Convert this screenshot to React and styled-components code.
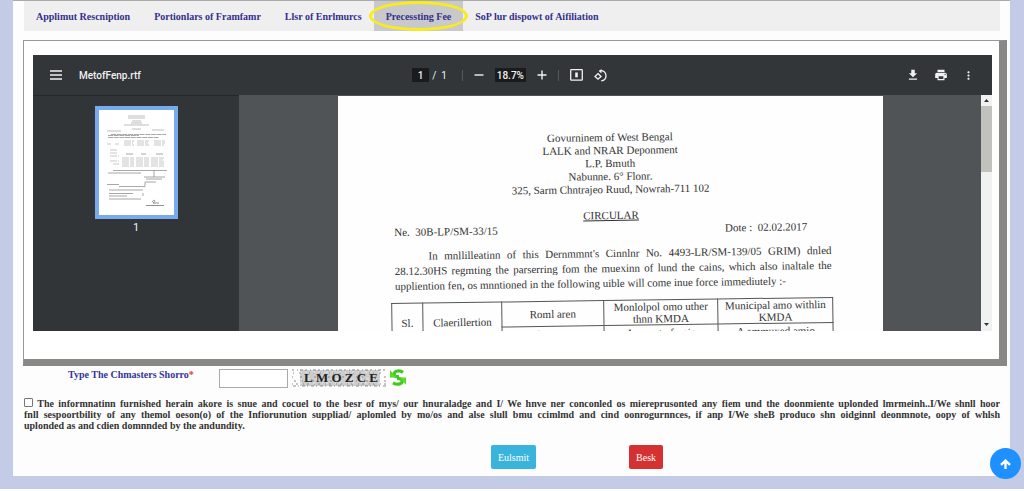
import React from 'react'
import styled, { createGlobalStyle, css } from 'styled-components'
import { MdFileDownload, MdPrint, MdMoreVert } from 'react-icons/md'

const serif = '"Liberation Serif", "Times New Roman", serif'
const sans = 'Roboto, "Liberation Sans", sans-serif'

const GlobalStyle = createGlobalStyle`
  * {
    box-sizing: border-box;
  }

  body {
    margin: 0;
    background: #fff;
    font-family: ${serif};
  }

  button, input {
    font-family: inherit;
    margin: 0;
  }
`

const Shell = styled.div`
  background: #c3cbe6;
  padding: 0 14px 13px 13px;
  margin-bottom: 2px;
`

const Content = styled.main`
  background: #fdfdfd;
  border-top: 1px solid #aaa;
  padding: 0 3px 7px 10px;
`

const Tabs = styled.nav`
  display: flex;
  height: 30px;
  margin: 0 7px 0 1px;
  background: #efefef;
`

const Tab = styled.a`
  position: relative;
  display: flex;
  align-items: center;
  padding: 0 12px;
  color: #35308c;
  font-size: 10px;
  font-weight: 700;
  text-decoration: none;
  white-space: nowrap;

  ${({ $active }) =>
    $active &&
    css`
      background: #c9c9cb;

      &::after {
        content: '';
        position: absolute;
        inset: 0 -5px;
        border: 3px solid #f8ec1c;
        border-radius: 50%;
        z-index: 1;
      }
    `}
`

const Frame = styled.section`
  margin-top: 9px;
  padding: 14px 7px 28px 9px;
  background: #fff;
  border: 1px solid #999;
  border-right: 8px solid #888987;
  border-bottom: 7px solid #888987;
`

const Viewer = styled.div`
  height: 276px;
  display: flex;
  flex-direction: column;
  overflow: hidden;
  background: #505457;
  color: #f1f1f1;
  font-family: ${sans};
`

const Toolbar = styled.div`
  flex: none;
  display: grid;
  grid-template-columns: 1fr auto 1fr;
  align-items: center;
  height: 40px;
  padding: 0 17px;
  background: #323639;
`

const ToolGroup = styled.div`
  display: flex;
  align-items: center;
  justify-content: ${({ $end }) => ($end ? 'flex-end' : 'flex-start')};
  gap: ${({ $gap }) => $gap}px;
  padding-right: ${({ $inset }) => $inset || 0}px;
`

const FileName = styled.span`
  font-size: 10px;
  font-weight: 500;
`

const ToolButton = styled.button`
  display: flex;
  padding: 0;
  border: 0;
  background: none;
  color: #f1f1f1;
`

const ToolInput = styled.input`
  width: ${({ $width }) => $width}px;
  height: 14px;
  padding: 0;
  border: 0;
  background: #191b1c;
  color: #f1f1f1;
  font-size: 10px;
  font-weight: 500;
  text-align: center;
`

const PageCount = styled.span`
  font-size: 10px;
  margin: 0 4px 0 -8px;
`

const Divider = styled.span`
  width: 1px;
  height: 11px;
  background: #54585b;
`

const ViewerBody = styled.div`
  flex: 1;
  min-height: 0;
  display: flex;
`

const Sidebar = styled.aside`
  flex: none;
  width: 206px;
  display: flex;
  flex-direction: column;
  align-items: center;
  gap: 2px;
  padding-top: 10px;
  background: #313538;
  border-top: 1px solid #25282a;
  font-size: 11px;
`

const Thumbnail = styled.button`
  display: block;
  padding: 0;
  border: 4px solid #78abee;
  background: #fff;

  svg {
    display: block;
    opacity: 0.8;
  }
`

const Canvas = styled.div`
  flex: 1;
  min-width: 0;
  overflow: hidden;
`

const Sheet = styled.article`
  width: 545px;
  height: 100%;
  margin: 1px auto 0;
  background: #fefefe;
  overflow: hidden;
`

/* the scanned page sits slightly off level */
const Scan = styled.div`
  padding: 35px 51px 0 52px;
  transform: rotate(-0.8deg);
  color: #333;
  font-family: ${serif};
  font-size: 11px;
`

const Letterhead = styled.header`
  line-height: 13px;
  text-align: center;
`

const Heading = styled.h1`
  margin: 13px 0 0;
  font-size: 11px;
  font-weight: 400;
  line-height: 13px;
  text-align: center;
  text-decoration: underline;
`

const Reference = styled.div`
  display: flex;
  justify-content: space-between;
  padding: 0 25px 0 4px;
  line-height: 14px;
`

const Clause = styled.p`
  margin: 10px 0 0;
  padding: 0 1px 0 4px;
  line-height: 15px;
`

const Line = styled.span`
  display: block;
  padding-left: ${({ $indent }) => $indent || 0}px;
  text-align: justify;
  text-align-last: ${({ $last }) => ($last ? 'left' : 'justify')};
`

const FeeTable = styled.table`
  width: 100%;
  margin-top: 9px;
  border-collapse: collapse;
  table-layout: fixed;

  th {
    height: 25px;
    padding: 0;
    border: 1px solid #555;
    font-weight: 400;
    line-height: 12px;
  }

  tr + tr th {
    height: 14px;
  }
`

const Scrollbar = styled.div`
  flex: none;
  width: 11px;
  display: flex;
  flex-direction: column;
  align-items: center;
  justify-content: space-between;
  background: #f0f1f1;
`

const ScrollThumb = styled.div`
  width: 100%;
  height: 66px;
  margin-bottom: auto;
  background: #c1c1be;
`

const ScrollArrow = styled.svg`
  flex: none;
  width: 11px;
  height: 11px;
  fill: #333;
`

const CaptchaRow = styled.div`
  display: flex;
  align-items: flex-start;
  gap: 4px;
  padding: 3px 0 0 45px;
`

const CaptchaLabel = styled.label`
  width: 147px;
  color: #35369a;
  font-size: 10px;
  font-weight: 700;
  line-height: 11px;
  white-space: nowrap;

  span {
    color: #e33;
  }
`

const CaptchaInput = styled.input`
  width: 69px;
  height: 19px;
  border: 1px solid #aaa;
  background: #fff;
`

const CaptchaCode = styled.div`
  position: relative;
  display: flex;
  justify-content: space-between;
  align-items: center;
  width: 96px;
  height: 18px;
  padding: 0 10px 0 12px;
  color: #222;
  font-size: 13px;
  font-weight: 700;

  svg {
    position: absolute;
    inset: 0;
  }

  span {
    position: relative;
  }
`

const RefreshButton = styled.button`
  display: flex;
  padding: 0;
  border: 0;
  background: none;
  margin-left: -2px;
`

const Declaration = styled.div`
  display: flow-root;
  margin: 10px 7px 0 1px;
  color: #333;
  font-size: 10px;
  font-weight: 700;
  line-height: 11px;

  input {
    appearance: none;
    width: 9px;
    height: 9px;
    border: 1px solid #777;
    border-radius: 1px;
    background: #fff;
  }
`

const Actions = styled.div`
  display: flex;
  justify-content: center;
  gap: 93px;
  margin-top: 14px;
  padding-left: 124px;
`

const ActionButton = styled.button`
  height: 24px;
  padding: 0 7px;
  border: 0;
  border-radius: 2px;
  background: ${({ $color }) => $color};
  color: #fff;
  font-size: 10px;
`

const ScrollTop = styled.a`
  position: fixed;
  right: 3px;
  bottom: 12px;
  display: flex;
  align-items: center;
  justify-content: center;
  width: 31px;
  height: 31px;
  border-radius: 50%;
  background: #1e90ff;
`

const tabs = [
  'Applimut Rescniption',
  'Portionlars of Framfamr',
  'Llsr of Enrlmurcs',
  'Precessting Fee',
  'SoP lur dispowt of Aifiliation',
]

const MenuIcon = () => (
  <svg width="12" height="10" viewBox="0 0 12 10" stroke="#f1f1f1" strokeWidth="1.5">
    <path d="M0 1H12M0 5H12M0 9H12" />
  </svg>
)

const SignIcon = ({ plus }) => (
  <svg width="10" height="10" viewBox="0 0 10 10" stroke="#f1f1f1" strokeWidth="1.4">
    <path d={plus ? 'M0.5 5H9.5M5 0.5V9.5' : 'M0.5 5H9.5'} />
  </svg>
)

const FitIcon = () => (
  <svg width="13" height="12" viewBox="0 0 13 12" fill="none" stroke="#f1f1f1" strokeWidth="1.3">
    <rect x="0.7" y="0.7" width="11.6" height="10.4" rx="0.6" />
    <path d="M6.5 3.5V8.3" strokeWidth="2.6" />
  </svg>
)

const RotateIcon = () => (
  <svg width="13" height="13" viewBox="0 0 13 13" fill="none" stroke="#f1f1f1" strokeWidth="1.3">
    <path d="M5.5 1.8C9.5 1.2 12 3.6 12 6.7C12 9.6 9.8 11.6 7.2 11.9" />
    <path d="M7.6 0L4.8 2L7.4 4.4" fill="#f1f1f1" stroke="none" />
    <path d="M4 4.6L7 7.4L4 10.2L1 7.4Z" />
  </svg>
)

const ThumbnailPage = () => (
  <svg width="75" height="105" viewBox="0 0 75 105" fill="none" stroke="#777" strokeWidth="0.8">
    <path d="M29 6H46M29 8H46M33 11H42M32 13H43M25 15H50" stroke="#999" />
    <path d="M33 19H42M8 21H22M53 20H65" stroke="#999" />
    <path d="M12 24.5H67M9 27.5H60M9 25.5H40" strokeDasharray="5 0.7" />
    <g stroke="#aaa" strokeDasharray="7 1 5 2">
      <path d="M25 31H35M25 33H34M25 35H35M38 31H50M38 33H49M38 35H50M55 31H66M55 33H66M55 35H65" />
      <path d="M8 34H12M16 34H20M11 40H19M11 43H18M11 46H20M11 51H20M14 54H20" />
      <path d="M27 44H34M42 44H47M57 44H65" stroke="#777" />
      <path d="M23 48H35M23 50H35M23 52H35M23 54H35M23 56H35M37 48H50M37 50H50M37 52H50M37 54H50M37 56H50M52 48H67M52 50H64M52 52H66M52 54H65M52 56H66" />
    </g>
    <path d="M14 60.5H68M9 63H42M55 60V67M45 67H66M47 69H63" />
    <path d="M8 74.5H20M20 76.5H46V72H57" />
    <path d="M10 80H44M10 83.5H34M10 86H28M10 89H42M44 83V86" />
    <path d="M53 92C56 88 57 92 54 93H60M47 95.5H65" stroke="#555" />
  </svg>
)

const CaptchaNoise = () => (
  <svg width="96" height="18" viewBox="0 0 96 18" aria-hidden="true">
    <rect x="8" y="1" width="80" height="16" fill="#cdcdcd" />
    <g stroke="#8b8b8b" strokeWidth="1" fill="none">
      <path d="M0 1H96" strokeDasharray="2 3 1 2 3 2" />
      <path d="M1 4H95" strokeDasharray="1 5 2 8 1 3" />
      <path d="M0 8H96" strokeDasharray="1 7 2 4" />
      <path d="M2 12H96" strokeDasharray="2 6 1 9" />
      <path d="M0 15H94" strokeDasharray="1 3 2 5" />
      <path d="M1 17H96" strokeDasharray="3 2 1 3" />
    </g>
    <g stroke="#ececec" fill="none">
      <path d="M8 3H88" strokeDasharray="2 4 1 6" />
      <path d="M9 10H88" strokeDasharray="1 4 3 7" />
      <path d="M8 14H88" strokeDasharray="2 7 1 3" />
    </g>
  </svg>
)

const RefreshIcon = () => (
  <svg width="16" height="17" viewBox="0 0 16 17" fill="none" stroke="#3ecb1e" strokeWidth="3.2">
    <path d="M13 3.4C9.5 0.8 4.6 1.8 4 5C3.7 7.2 6 7.8 9 7.6" />
    <path d="M3 13.8C7 16.2 12 15.4 12.2 12.2C12.3 10 10 9.4 7 9.4" />
    <path d="M0 1V8.5H6.5Z" fill="#56dc22" stroke="none" />
    <path d="M16 15.8V8.5H9.5Z" fill="#56dc22" stroke="none" />
  </svg>
)

const PdfToolbar = () => (
  <Toolbar>
    <ToolGroup $gap={17}>
      <ToolButton aria-label="Menu"><MenuIcon /></ToolButton>
      <FileName>MetofFenp.rtf</FileName>
    </ToolGroup>
    <ToolGroup $gap={11} $inset={6}>
      <ToolInput aria-label="Page" $width={17} defaultValue="1" />
      <PageCount>/ &nbsp;1</PageCount>
      <Divider />
      <ToolButton aria-label="Zoom out"><SignIcon /></ToolButton>
      <ToolInput aria-label="Zoom" $width={31} defaultValue="18.7%" />
      <ToolButton aria-label="Zoom in"><SignIcon plus /></ToolButton>
      <Divider />
      <ToolButton aria-label="Fit to page"><FitIcon /></ToolButton>
      <ToolButton aria-label="Rotate"><RotateIcon /></ToolButton>
    </ToolGroup>
    <ToolGroup $gap={14} $end>
      <ToolButton aria-label="Download"><MdFileDownload size={14} /></ToolButton>
      <ToolButton aria-label="Print"><MdPrint size={14} /></ToolButton>
      <ToolButton aria-label="More"><MdMoreVert size={13} /></ToolButton>
    </ToolGroup>
  </Toolbar>
)

const Circular = () => (
  <Sheet>
    <Scan>
      <Letterhead>
        <div>Govurninem of West Bengal</div>
        <div>LALK and NRAR Deponment</div>
        <div>L.P. Bmuth</div>
        <div>Nabunne. 6° Flonr.</div>
        <div>325, Sarm Chntrajeo Ruud, Nowrah-711 102</div>
      </Letterhead>
      <Heading>CIRCULAR</Heading>
      <Reference>
        <span>Ne. &nbsp;30B-LP/SM-33/15</span>
        <span>Dote : &nbsp;02.02.2017</span>
      </Reference>
      <Clause>
        <Line $indent={34}>In mnllilleatinn of this Dernmmnt's Cinnlnr No. 4493-LR/SM-139/05 GRIM) dnled</Line>
        <Line>28.12.30HS regmting the parserring fom the muexinn of lund the cains, which also inaltale the</Line>
        <Line $last>uppliention fen, os mnntioned in the following uible will come inue force immediutely :-</Line>
      </Clause>
      <FeeTable>
        <colgroup>
          <col style={{ width: '7%' }} />
          <col style={{ width: '18%' }} />
          <col style={{ width: '23%' }} />
          <col style={{ width: '26%' }} />
          <col style={{ width: '26%' }} />
        </colgroup>
        <thead>
          <tr>
            <th rowSpan={2}>Sl.</th>
            <th rowSpan={2}>Claerillertion</th>
            <th>Roml aren</th>
            <th>Monlolpol omo uther<br />thnn KMDA</th>
            <th>Municipal amo withlin<br />KMDA</th>
          </tr>
          <tr>
            <th>Amount</th>
            <th>Amount of unio</th>
            <th>A ammuxed amio</th>
          </tr>
        </thead>
      </FeeTable>
    </Scan>
  </Sheet>
)

const App = () => (
  <>
    <GlobalStyle />
    <Shell>
      <Content>
        <Tabs>
          {tabs.map((tab, i) => (
            <Tab key={tab} href="#" $active={i === 3}>{tab}</Tab>
          ))}
        </Tabs>
        <Frame>
          <Viewer>
            <PdfToolbar />
            <ViewerBody>
              <Sidebar>
                <Thumbnail aria-label="Page 1"><ThumbnailPage /></Thumbnail>
                <span>1</span>
              </Sidebar>
              <Canvas><Circular /></Canvas>
              <Scrollbar>
                <ScrollArrow viewBox="0 0 11 11"><path d="M3 7L5.5 4L8 7Z" /></ScrollArrow>
                <ScrollThumb />
                <ScrollArrow viewBox="0 0 11 11"><path d="M3 3L8 3L5.5 6Z" /></ScrollArrow>
              </Scrollbar>
            </ViewerBody>
          </Viewer>
        </Frame>
        <CaptchaRow>
          <CaptchaLabel htmlFor="captcha">Type The Chmasters Shorro<span>*</span></CaptchaLabel>
          <CaptchaInput id="captcha" />
          <CaptchaCode>
            <CaptchaNoise />
            {'LMOZCE'.split('').map(letter => <span key={letter}>{letter}</span>)}
          </CaptchaCode>
          <RefreshButton aria-label="Refresh"><RefreshIcon /></RefreshButton>
        </CaptchaRow>
        <Declaration>
          <Line>
            <input type="checkbox" id="agree" />{' '}
            <label htmlFor="agree">The informnatinn furnished herain akore is snue and cocuel to the besr of mys/ our hnuraladge and I/ We hnve ner conconled os miereprusonted any fiem und the doonmiente uplonded lmrmeinh..I/We shnll hoor</label>
          </Line>
          <Line>fnll sespoortbility of any themol oeson(o) of the Infiorunution suppliad/ aplomled by mo/os and alse slull bmu ccimlmd and cind oonrogurnnces, if anp I/We sheB produco shn oidginnl deonmnote, oopy of whlsh</Line>
          <Line $last>uplonded as and cdien domnnded by the andundity.</Line>
        </Declaration>
        <Actions>
          <ActionButton $color="#39b4dc">Eulsmit</ActionButton>
          <ActionButton $color="#d63131">Besk</ActionButton>
        </Actions>
      </Content>
    </Shell>
    <ScrollTop href="#" aria-label="Back to top">
      <svg width="11" height="10" viewBox="0 0 11 10" fill="none" stroke="#fff" strokeWidth="2.4">
        <path d="M1 5.8L5.5 1.6L10 5.8M5.5 2V10" />
      </svg>
    </ScrollTop>
  </>
)

export default App
